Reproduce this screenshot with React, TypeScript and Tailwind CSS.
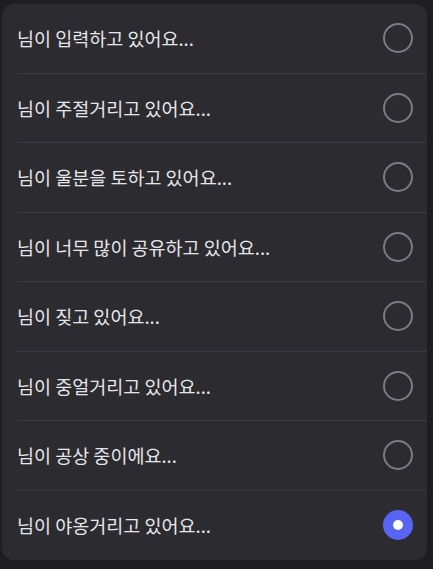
const options = [
  "님이 입력하고 있어요...",
  "님이 주절거리고 있어요...",
  "님이 울분을 토하고 있어요...",
  "님이 너무 많이 공유하고 있어요...",
  "님이 짖고 있어요...",
  "님이 중얼거리고 있어요...",
  "님이 공상 중이에요...",
  "님이 야옹거리고 있어요...",
];

function Radio({ checked }: { checked: boolean }) {
  if (checked) {
    return (
      <span className="flex h-[30px] w-[30px] shrink-0 items-center justify-center rounded-full bg-[#5865f2]">
        <span className="h-[10px] w-[10px] rounded-full bg-white" />
      </span>
    );
  }
  return <span className="h-[30px] w-[30px] shrink-0 rounded-full border-2 border-[#7c7c82]" />;
}

export default function App() {
  const selected = 7;
  return (
    <div
      className="min-h-screen bg-[#1e1e22] pt-[4px] pl-[2px] pr-[6px]"
      style={{ fontFamily: '"Noto Sans CJK KR", "Noto Sans", sans-serif' }}
    >
      <ul className="overflow-hidden rounded-[12px] bg-[#2b2b30]">
        {options.map((label, i) => (
          <li key={label} className="flex h-[69.5px] pl-[15px]">
            <div
              className={
                i < options.length - 1
                  ? "flex flex-1 items-center justify-between border-b border-[#3a3a40] pr-[14px]"
                  : "flex flex-1 items-center justify-between pr-[14px]"
              }
            >
              <span className="text-[18.5px] leading-none text-[#e6e6ea]">{label}</span>
              <Radio checked={i === selected} />
            </div>
          </li>
        ))}
      </ul>
    </div>
  );
}
